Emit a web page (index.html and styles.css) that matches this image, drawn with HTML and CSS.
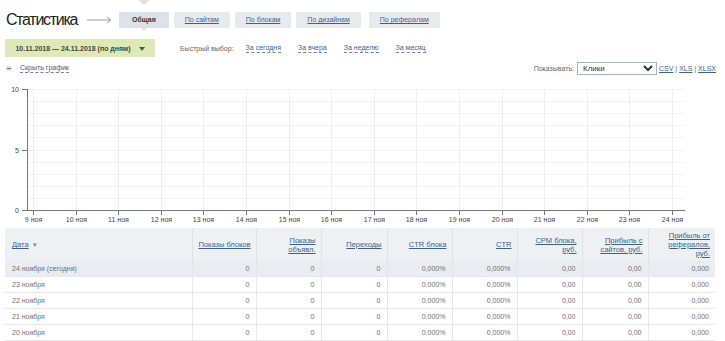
FILE: index.html
```html
<!DOCTYPE html>
<html lang="ru">
<head>
  <meta charset="UTF-8" />
  <title>Статистика</title>
  <link rel="stylesheet" href="styles.css">
</head>
<body>

  <div class="head">
    <h1>Статистика</h1>
    <svg class="arrow" width="26" height="8" viewBox="0 0 26 8">
      <path d="M0 4H24M20 1L24 4L20 7" fill="none" stroke="#9a9a9a" stroke-width="1"/>
    </svg>
    <div class="tabs">
      <span class="tab active">Общая</span>
      <a class="tab" href="#">По сайтам</a>
      <a class="tab" href="#">По блокам</a>
      <a class="tab" href="#">По дизайнам</a>
      <a class="tab wide" href="#">По рефералам</a>
    </div>
  </div>

  <div class="filters">
    <button class="period">10.11.2018 — 24.11.2018 (по дням) <span class="caret"></span></button>
    <span class="quick-label">Быстрый выбор:</span>
    <a class="dash" href="#">За сегодня</a>
    <a class="dash" href="#">За вчера</a>
    <a class="dash" href="#">За неделю</a>
    <a class="dash" href="#">За месяц</a>
  </div>

  <div class="chart-bar">
    <div class="toggle">
      <span class="minus"></span>
      <a class="dash" href="#">Скрыть график</a>
    </div>
    <div class="show">
      <span class="quick-label">Показывать:</span>
      <select class="metric">
        <option>Клики</option>
        <option>Показы</option>
      </select>
      <span><a href="#">CSV</a> | <a href="#">XLS</a> | <a href="#">XLSX</a></span>
    </div>
  </div>

  <svg id="chart" class="chart" width="725" height="146"></svg>

  <table class="stats">
    <colgroup>
      <col style="width:187px"><col style="width:64px"><col style="width:65px"><col style="width:66px"><col style="width:65px"><col style="width:65px"><col style="width:65px"><col style="width:66px"><col style="width:67px">
    </colgroup>
    <thead>
      <tr>
        <th class="left"><a href="#">Дата</a> <span class="sort">▾</span></th>
        <th><a href="#">Показы блоков</a></th>
        <th><a href="#">Показы объявл.</a></th>
        <th><a href="#">Переходы</a></th>
        <th><a href="#">CTR блока</a></th>
        <th><a href="#">CTR</a></th>
        <th><a href="#">CPM блока, руб.</a></th>
        <th><a href="#">Прибыль с сайтов, руб.</a></th>
        <th><a href="#">Прибыль от рефералов, руб.</a></th>
      </tr>
    </thead>
    <tbody id="rows"></tbody>
  </table>

  <script>
    // chart grid
    const svg = document.getElementById('chart');
    const top0 = 11, bottom0 = 132, axisX = 27, endX = 685;
    let out = '';

    for (let i = 0; i <= 10; i++) {
      const y = Math.round(top0 + (bottom0 - top0) * i / 10) + 0.5;
      out += `<line x1="${axisX}" y1="${y}" x2="${endX}" y2="${y}" stroke="#f3f3f3"/>`;
    }
    for (let d = 0; d < 16; d++) {
      const x = Math.round(33 + d * 42.6) + 0.5;
      out += `<line x1="${x}" y1="${top0}" x2="${x}" y2="${bottom0}" stroke="#eeeeee"/>`;
      out += `<line x1="${x}" y1="${bottom0}" x2="${x}" y2="${bottom0 + 5}" stroke="#777"/>`;
      out += `<text x="${x}" y="${bottom0 + 12}" class="tick" text-anchor="middle">${9 + d} ноя</text>`;
    }
    [[10, top0], [5, Math.round((top0 + bottom0) / 2)], [0, bottom0]].forEach(([v, y]) => {
      out += `<line x1="${axisX - 5}" y1="${y + 0.5}" x2="${axisX}" y2="${y + 0.5}" stroke="#777"/>`;
      out += `<text x="${axisX - 8}" y="${y + 3}" class="tick" text-anchor="end">${v}</text>`;
    });
    out += `<line x1="${axisX + 0.5}" y1="${top0}" x2="${axisX + 0.5}" y2="${bottom0}" stroke="#777"/>`;
    out += `<line x1="${axisX}" y1="${bottom0 + 0.5}" x2="${endX}" y2="${bottom0 + 0.5}" stroke="#777"/>`;
    svg.innerHTML = out;

    // table rows
    const days = ['24 ноября (сегодня)', '23 ноября', '22 ноября', '21 ноября', '20 ноября'];
    const tbody = document.getElementById('rows');
    days.forEach((day, i) => {
      const tr = document.createElement('tr');
      if (i === 0) tr.className = 'today';
      tr.innerHTML = `<td class="left">${day}</td><td>0</td><td>0</td><td>0</td>` +
        `<td>0,000%</td><td>0,000%</td><td>0,00</td><td>0,00</td><td>0,000</td>`;
      tbody.appendChild(tr);
    });
  </script>

</body>
</html>
```

FILE: styles.css
```css
body {
  margin: 0;
  padding: 0 5px;
  font-family: 'Liberation Sans', Arial, sans-serif;
  font-size: 7px;
  color: #666;
  background: #fff;
}

a {
  color: #3d5f8f;
}

.head {
  display: flex;
  align-items: center;
  height: 40px;
}

h1 {
  margin: 0 0 0 1px;
  font-size: 16px;
  font-weight: normal;
  color: #222;
  letter-spacing: -1.3px;
}

.arrow {
  margin: 0 6px 0 10px;
}

.tabs {
  display: flex;
  gap: 5px;
}

.tab {
  display: block;
  height: 16px;
  line-height: 16px;
  padding: 0 11px;
  background: #e8ebee;
  font-size: 7px;
  border-radius: 1px;
}

.tab.wide {
  margin-left: 3px;
}

.tab.active {
  position: relative;
  background: #dce2e9;
  color: #333;
  font-weight: bold;
  padding: 0 13px;
}

.tab.active::before,
.tab.active::after {
  content: '';
  position: absolute;
  left: 50%;
  border-style: solid;
  border-color: transparent;
}

.tab.active::before {
  top: -12px;
  margin-left: -6px;
  border-width: 5px 6px 0;
  border-top-color: #dce2e9;
}

.tab.active::after {
  bottom: -3px;
  margin-left: -3px;
  border-width: 3px 3px 0;
  border-top-color: #dce2e9;
}

.filters {
  display: flex;
  align-items: center;
  height: 18px;
  margin-top: -1px;
}

.period {
  font-family: inherit;
  height: 18px;
  width: 150px;
  padding: 0;
  background: #dcebb6;
  border: none;
  border-radius: 1px;
  font-size: 7px;
  font-weight: bold;
  color: #444;
  margin-right: 25px;
}

.caret {
  display: inline-block;
  margin-left: 6px;
  border-style: solid;
  border-width: 4px 3.5px 0;
  border-color: #555 transparent transparent;
  vertical-align: 0;
}

.quick-label {
  color: #666;
  font-size: 7px;
}

.filters .quick-label {
  margin-right: 12px;
}

.dash {
  color: #3d5f8f;
  text-decoration: none;
  border-bottom: 1px dashed #6a84aa;
  line-height: 8px;
  margin-right: 17px;
  font-size: 7px;
}

.chart-bar {
  display: flex;
  justify-content: space-between;
  align-items: center;
  height: 16px;
  margin-top: 3px;
}

.toggle {
  display: flex;
  align-items: center;
  padding-left: 1px;
}

.minus {
  width: 6px;
  height: 5px;
  background: #e4e7ea;
  position: relative;
  margin-right: 8px;
}

.minus::after {
  content: '';
  position: absolute;
  left: 1px;
  right: 1px;
  top: 2px;
  height: 1px;
  background: #777;
}

.show {
  display: flex;
  align-items: center;
  gap: 2px;
  font-size: 7px;
  color: #666;
  padding-right: 4px;
}

.show .quick-label {
  margin-right: 1px;
}

.metric {
  width: 80px;
  height: 13px;
  padding: 0 1px;
  font-family: inherit;
  font-size: 8px;
  border: 1px solid #a3b4c8;
  border-radius: 0;
  background: #fff;
  color: #333;
}

.chart {
  display: block;
  margin: 2px 0 0 -5px;
}

.tick {
  font-family: 'Liberation Sans', Arial, sans-serif;
  font-size: 7px;
  fill: #444;
}

.stats {
  width: 710px;
  border-collapse: collapse;
  table-layout: fixed;
  margin-top: 4px;
  font-size: 7.5px;
}

.stats th {
  height: 33px;
  padding: 0 5px;
  background: #eef1f4;
  border-left: 1px solid #dde2e7;
  text-align: right;
  font-weight: normal;
  line-height: 9px;
  vertical-align: middle;
}

.stats th:first-child,
.stats td:first-child {
  border-left: none;
}

.stats .left {
  text-align: left;
}

.stats th.left {
  padding-left: 7px;
}

.sort {
  color: #888;
  font-size: 7px;
  margin-left: 2px;
}

.stats td {
  height: 15px;
  padding: 0 6px;
  font-size: 7px;
  text-align: right;
  color: #707070;
  border-bottom: 1px solid #e6e6e6;
  border-left: 1px solid #e6e6e6;
}

.stats td.left {
  padding-left: 7px;
}

.stats tr.today td {
  background: #e9edf1;
}
```
